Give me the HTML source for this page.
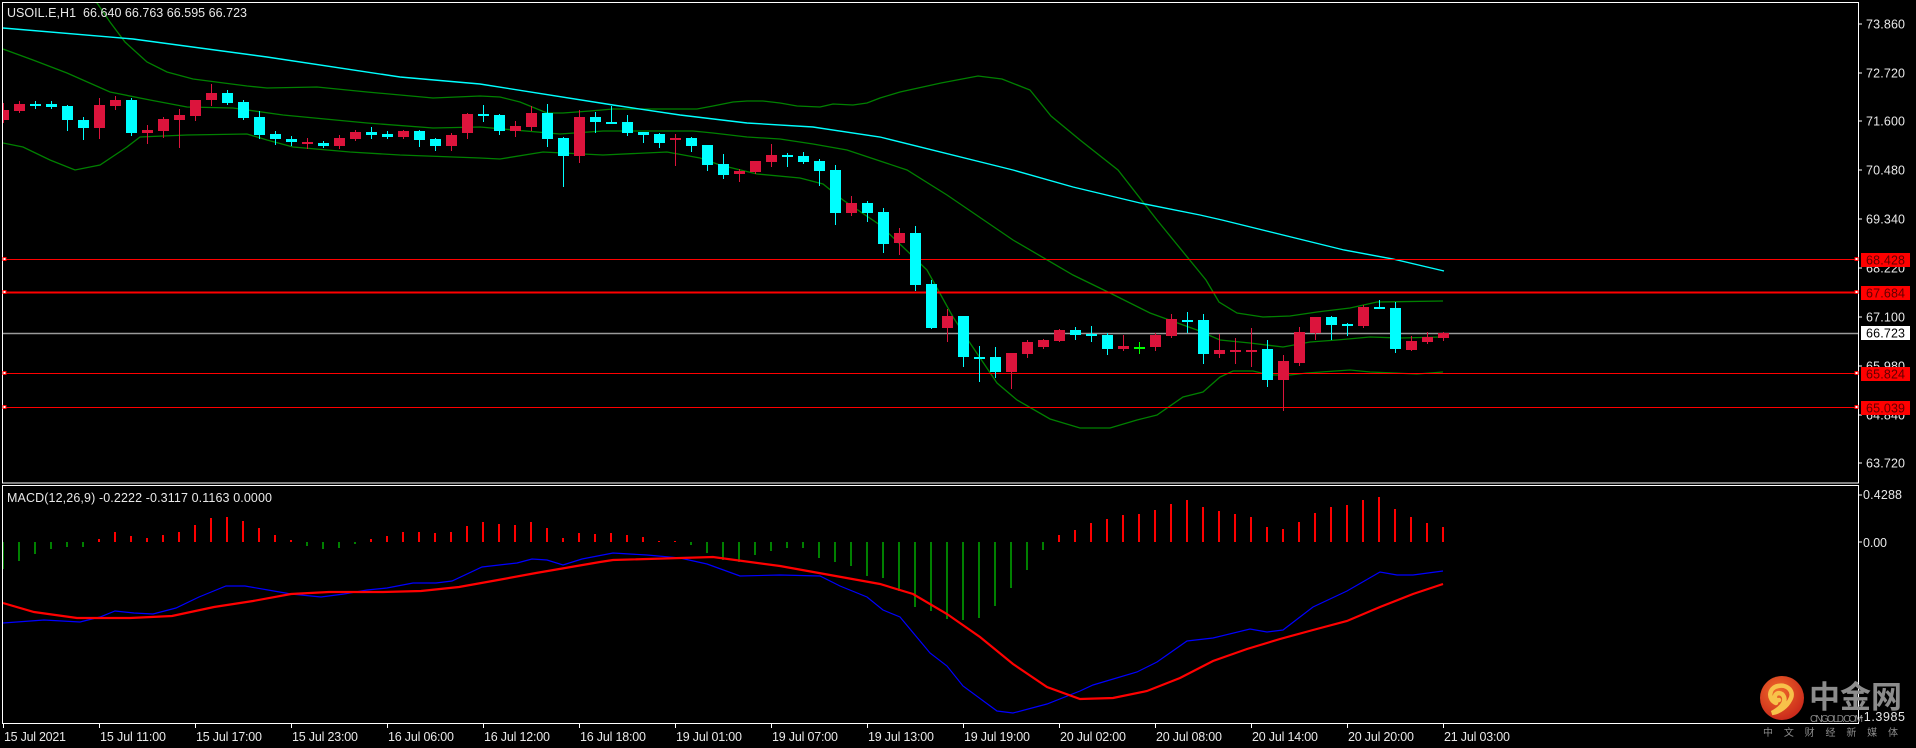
<!DOCTYPE html>
<html><head><meta charset="utf-8"><style>
html,body{margin:0;padding:0;background:#000;width:1916px;height:748px;overflow:hidden}
svg{display:block}
text{font-family:"Liberation Sans","Noto Sans CJK SC",sans-serif}
</style></head><body>
<svg id="s" width="1916" height="748" viewBox="0 0 1916 748" xmlns="http://www.w3.org/2000/svg">
<defs>
<clipPath id="cm"><rect x="3" y="3" width="1855" height="479"/></clipPath>
<clipPath id="cd"><rect x="3" y="486" width="1855" height="237"/></clipPath>
<radialGradient id="lg" cx="0.4" cy="0.35" r="0.7"><stop offset="0" stop-color="#f06a2a"/><stop offset="1" stop-color="#c8261a"/></radialGradient>
</defs>
<rect width="1916" height="748" fill="#000"/>
<!-- frames -->
<rect x="2.5" y="2.5" width="1856" height="480.5" fill="none" stroke="#fff" stroke-width="1"/>
<rect x="2.5" y="485.5" width="1856" height="238" fill="none" stroke="#fff" stroke-width="1"/>
<g id="main" clip-path="url(#cm)">
<polyline fill="none" stroke="#008000" stroke-width="1.3" points="90,0 97,3 110,22 125,42 147,62 167,72 193,79 247,86 267,88 317,87 367,92 433,98 480,96 500,97 520,102 547,113 563,113 590,111 613,109 697,109 713,106 733,102 747,101 763,101 780,103 797,106 820,107 833,104 853,105 867,103 880,98 900,92 941,83 978,76 1002,79 1030,90 1051,116 1080,140 1118,170 1157,220 1206,280 1219,302 1237,313 1263,317 1290,316 1317,312 1350,308 1377,302 1443,301"/>
<polyline fill="none" stroke="#008000" stroke-width="1.3" points="3,49 33,60 67,73 110,92 150,100 187,107 233,108 283,115 367,123 433,128 480,127 560,134 603,131 693,131 713,133 747,137 780,139 813,144 847,150 880,161 907,170 947,195 1013,240 1073,275 1110,293 1150,313 1197,330 1220,340 1250,343 1283,347 1310,342 1337,340 1370,337 1400,338 1443,337"/>
<polyline fill="none" stroke="#008000" stroke-width="1.3" points="3,143 23,147 50,160 75,170 100,165 127,147 140,137 187,135 247,134 267,140 293,147 350,152 400,155 480,158 500,159 543,152 603,155 667,152 700,158 720,165 757,174 800,178 823,184 843,200 880,225 927,270 953,317 970,343 997,383 1017,400 1050,419 1080,428 1110,428 1137,420 1157,415 1183,397 1203,392 1220,377 1233,371 1253,371 1270,375 1290,375 1307,373 1350,370 1370,372 1417,374 1443,372"/>
<polyline fill="none" stroke="#00ffff" stroke-width="1.4" points="3,28 133,39 267,57 400,77 480,84 613,105 680,115 747,123 813,127 880,137 1013,170 1073,187 1140,203 1200,215 1222,220 1344,250 1393,259 1444,271"/>
<line x1="3" y1="259.5" x2="1858" y2="259.5" stroke="#ff0000" stroke-width="1"/>
<line x1="3" y1="292.5" x2="1858" y2="292.5" stroke="#ff0000" stroke-width="2"/>
<line x1="3" y1="333.5" x2="1858" y2="333.5" stroke="#9a9a9a" stroke-width="1.5"/>
<line x1="3" y1="373.5" x2="1858" y2="373.5" stroke="#ff0000" stroke-width="1"/>
<line x1="3" y1="407.5" x2="1858" y2="407.5" stroke="#ff0000" stroke-width="1"/>
<g id="candles"></g>
</g>
<g fill="#fff" stroke="#ff0000" stroke-width="1">
<rect x="1855" y="257.5" width="3" height="3"/><rect x="1855" y="290.5" width="3" height="3"/><rect x="1855" y="371.5" width="3" height="3"/><rect x="1855" y="405.5" width="3" height="3"/>
<rect x="3" y="257.5" width="3" height="3"/><rect x="3" y="290.5" width="3" height="3"/><rect x="3" y="371.5" width="3" height="3"/><rect x="3" y="405.5" width="3" height="3"/>
</g>
<g id="macd" clip-path="url(#cd)">
<g id="hist"></g>
<polyline fill="none" stroke="#0000ff" stroke-width="1.2" points="3,623 44,620 80,622 100,617 115,611 134,613 153,614 176,608 199,597 226,586 245,586 268,590 291,594 321,597 344,594 367,590 387,588 413,583 436,583 452,581 482,567 517,563 532,559 547,560 563,565 582,559 613,553 647,555 680,558 707,564 740,576 780,575 820,576 840,586 867,597 883,610 900,617 930,653 947,666 963,686 997,711 1013,713 1047,704 1080,691 1093,685 1137,672 1157,662 1187,641 1213,638 1250,629 1267,632 1283,630 1313,607 1347,591 1380,572 1397,575 1413,575 1443,571"/>
<polyline fill="none" stroke="#ff0000" stroke-width="2.2" points="3,603 34,612 77,618 130,618 172,616 214,607 253,601 291,594 329,592 383,592 421,591 459,587 498,580 536,573 600,562 613,560 713,557 780,566 880,584 913,594 947,614 980,637 1013,664 1047,687 1080,699 1113,698 1147,691 1180,678 1213,661 1247,649 1280,639 1313,630 1347,621 1380,607 1413,594 1443,584"/>
</g>
<!-- axis ticks -->
<g stroke="#fff" stroke-width="1">
<line x1="1859" y1="24" x2="1862" y2="24"/><line x1="1859" y1="73" x2="1862" y2="73"/><line x1="1859" y1="121" x2="1862" y2="121"/><line x1="1859" y1="170" x2="1862" y2="170"/><line x1="1859" y1="219" x2="1862" y2="219"/><line x1="1859" y1="268" x2="1862" y2="268"/><line x1="1859" y1="317" x2="1862" y2="317"/><line x1="1859" y1="366" x2="1862" y2="366"/><line x1="1859" y1="415" x2="1862" y2="415"/><line x1="1859" y1="463" x2="1862" y2="463"/>
<line x1="1859" y1="495" x2="1862" y2="495"/><line x1="1859" y1="542" x2="1862" y2="542"/>
</g>
<g id="ticks" stroke="#fff" stroke-width="1"></g>
<g fill="#e8e8e8" font-size="12.5">
<text x="1866" y="28.5" textLength="39">73.860</text>
<text x="1866" y="77.5" textLength="39">72.720</text>
<text x="1866" y="125.5" textLength="39">71.600</text>
<text x="1866" y="174.5" textLength="39">70.480</text>
<text x="1866" y="223.5" textLength="39">69.340</text>
<text x="1866" y="272.5" textLength="39">68.220</text>
<text x="1866" y="321.5" textLength="39">67.100</text>
<text x="1866" y="370.5" textLength="39">65.980</text>
<text x="1866" y="419.5" textLength="39">64.840</text>
<text x="1866" y="467.5" textLength="39">63.720</text>
<text x="1863" y="499" textLength="39">0.4288</text>
<text x="1863" y="547" textLength="24">0.00</text>
<text x="1859" y="721" textLength="46">-1.3985</text>
</g>
<g font-size="12.5">
<rect x="1861" y="253" width="49" height="14" fill="#ff0000"/><text x="1866" y="264.5" fill="#600000" textLength="39">68.428</text>
<rect x="1861" y="286" width="49" height="14" fill="#ff0000"/><text x="1866" y="297.5" fill="#600000" textLength="39">67.684</text>
<rect x="1861" y="326" width="49" height="14" fill="#ffffff"/><text x="1866" y="337.5" fill="#000" textLength="39">66.723</text>
<rect x="1861" y="367" width="49" height="14" fill="#ff0000"/><text x="1866" y="378.5" fill="#600000" textLength="39">65.824</text>
<rect x="1861" y="401" width="49" height="14" fill="#ff0000"/><text x="1866" y="412.5" fill="#600000" textLength="39">65.039</text>
</g>
<text x="7" y="17" fill="#e8e8e8" font-size="12.5" textLength="240" xml:space="preserve">USOIL.E,H1  66.640 66.763 66.595 66.723</text>
<text x="7" y="502" fill="#e8e8e8" font-size="12.5" textLength="265">MACD(12,26,9) -0.2222 -0.3117 0.1163 0.0000</text>
<g id="tlabels" fill="#e8e8e8" font-size="12.5"></g>
<!-- logo -->
<circle cx="1782" cy="698" r="22" fill="url(#lg)"/>
<path d="M1776,703 C1768,700 1768,688 1778,686 C1788,684 1795,692 1790,700 C1787,706 1780,712 1772,713 C1781,708 1786,703 1784,697 C1782,692 1776,692 1775,696 C1774,699 1777,701 1779,700" fill="none" stroke="#f7c24a" stroke-width="4.5" stroke-linecap="round"/>
<text x="1809" y="708" fill="#8c8c8c" font-size="31" font-weight="bold" font-family="'Noto Sans CJK SC',sans-serif" textLength="93">中金网</text>
<text x="1810" y="722" fill="#8c8c8c" font-size="10" textLength="53">CNGOLD.COM</text>
<text x="1763" y="736" fill="#8c8c8c" font-size="10" font-family="'Noto Sans CJK SC',sans-serif" textLength="135">中文财经新媒体</text>
</svg>
<script>
(function(){
var NS="http://www.w3.org/2000/svg";
var C=[
"r110,120,103,122","r104,111,101,112","c104,104,101,108","c104,107,101,108","c106,120,105,130","c120,128,117,139","r105,128,98,138","r100,106,96,109","c100,133,98,135","r130,133,125,143",
"r119,131,117,137","r115,120,109,147","r100,116,100,120","r93,100,84,105","c93,103,90,104","c102,118,100,119","c117,135,111,138","c134,139,131,144","c139,142,136,145","r142,143,138,148",
"c143,146,141,147","r138,146,135,148","r132,139,130,140","c132,135,127,138","c134,137,131,138","r131,137,130,138","c131,140,130,146","c139,146,138,150","r135,146,133,150","r114,133,113,138",
"c114,115,105,121","c115,131,114,134","r126,131,121,136","r113,127,106,130","c113,139,104,146","c138,156,137,186","r117,156,110,162","c117,122,112,132","c122,122,106,122","c122,133,115,135",
"c132,135,132,142","c134,143,133,147","r138,138,134,165","c138,146,137,151","c145,165,145,170","c164,175,154,178","r171,174,169,181","r161,172,161,173","r155,162,144,166","c155,157,153,166",
"c156,162,152,163","c161,171,159,185","c170,213,165,224","r203,213,196,215","c203,213,201,221","c212,244,208,252","r233,243,228,254","c233,285,226,290","c284,328,280,328","r316,328,309,341",
"c316,357,316,366","c357,357,346,381","c357,372,347,377","r353,372,353,388","r342,354,340,357","r340,347,339,348","r330,341,329,341","c330,335,327,339","c334,334,326,341","c335,349,333,354",
"r346,349,335,350","g347,347,342,353","r335,347,333,350","r319,336,314,337","c320,320,312,332","c320,354,314,363","r350,354,334,357","r350,350,338,363","r350,350,328,366","c349,380,340,386",
"r361,380,355,410","r332,363,327,365","r317,333,317,339","c317,325,316,339","c324,324,323,335","r307,326,305,327","c307,308,300,308","c308,349,302,352","r341,350,336,350","r337,342,332,343",
"r333,338,332,340"];
var col={r:"#dc143c",c:"#00ffff",g:"#00ff00"};
var g=document.getElementById("candles"),h="";
for(var i=0;i<C.length;i++){
 var s=C[i],k=col[s[0]],v=s.slice(1).split(",").map(Number),x=3+16*i;
 h+='<line x1="'+(x+0.5)+'" y1="'+v[2]+'" x2="'+(x+0.5)+'" y2="'+(v[3]+1)+'" stroke="'+k+'" stroke-width="1"/>';
 var hh=Math.max(v[1]-v[0],2);
 h+='<rect x="'+(x-5)+'" y="'+v[0]+'" width="11" height="'+hh+'" fill="'+k+'"/>';
}
g.innerHTML=h;
var H=[-569,-561,-554,-549,-547,-547,539,532,536,538,535,532,525,518,517,521,528,535,540,-546,-549,-548,-544,539,536,532,532,533,532,526,522,524,525,522,528,538,533,534,533,535,537,541,541,-545,-553,-560,-562,-555,-551,-548,-548,-558,-562,-566,-576,-578,-591,-607,-611,-619,-620,-618,-606,-588,-570,-550,535,530,523,519,515,514,510,504,500,507,511,514,517,527,529,522,513,507,505,500,497,509,517,523,527];
var hs="";
for(var j=0;j<H.length;j++){
 var x2=3+16*j-1,v2=H[j];
 if(v2>0) hs+='<rect x="'+x2+'" y="'+v2+'" width="2" height="'+(542-v2)+'" fill="#ff0000"/>';
 else hs+='<rect x="'+x2+'" y="542" width="2" height="'+(-v2-542)+'" fill="#008000"/>';
}
document.getElementById("hist").innerHTML=hs;
var L=["15 Jul 2021","15 Jul 11:00","15 Jul 17:00","15 Jul 23:00","16 Jul 06:00","16 Jul 12:00","16 Jul 18:00","19 Jul 01:00","19 Jul 07:00","19 Jul 13:00","19 Jul 19:00","20 Jul 02:00","20 Jul 08:00","20 Jul 14:00","20 Jul 20:00","21 Jul 03:00"];
var ts="",tk="";
for(var m=0;m<L.length;m++){
 var x3=3+96*m;
 ts+='<text x="'+(x3+1)+'" y="741" textLength="'+(m==0?62:66)+'">'+L[m]+'</text>';
 tk+='<line x1="'+(x3+0.5)+'" y1="724" x2="'+(x3+0.5)+'" y2="728"/>';
}
document.getElementById("tlabels").innerHTML=ts;
document.getElementById("ticks").innerHTML=tk;
})();
</script>
</body></html>
